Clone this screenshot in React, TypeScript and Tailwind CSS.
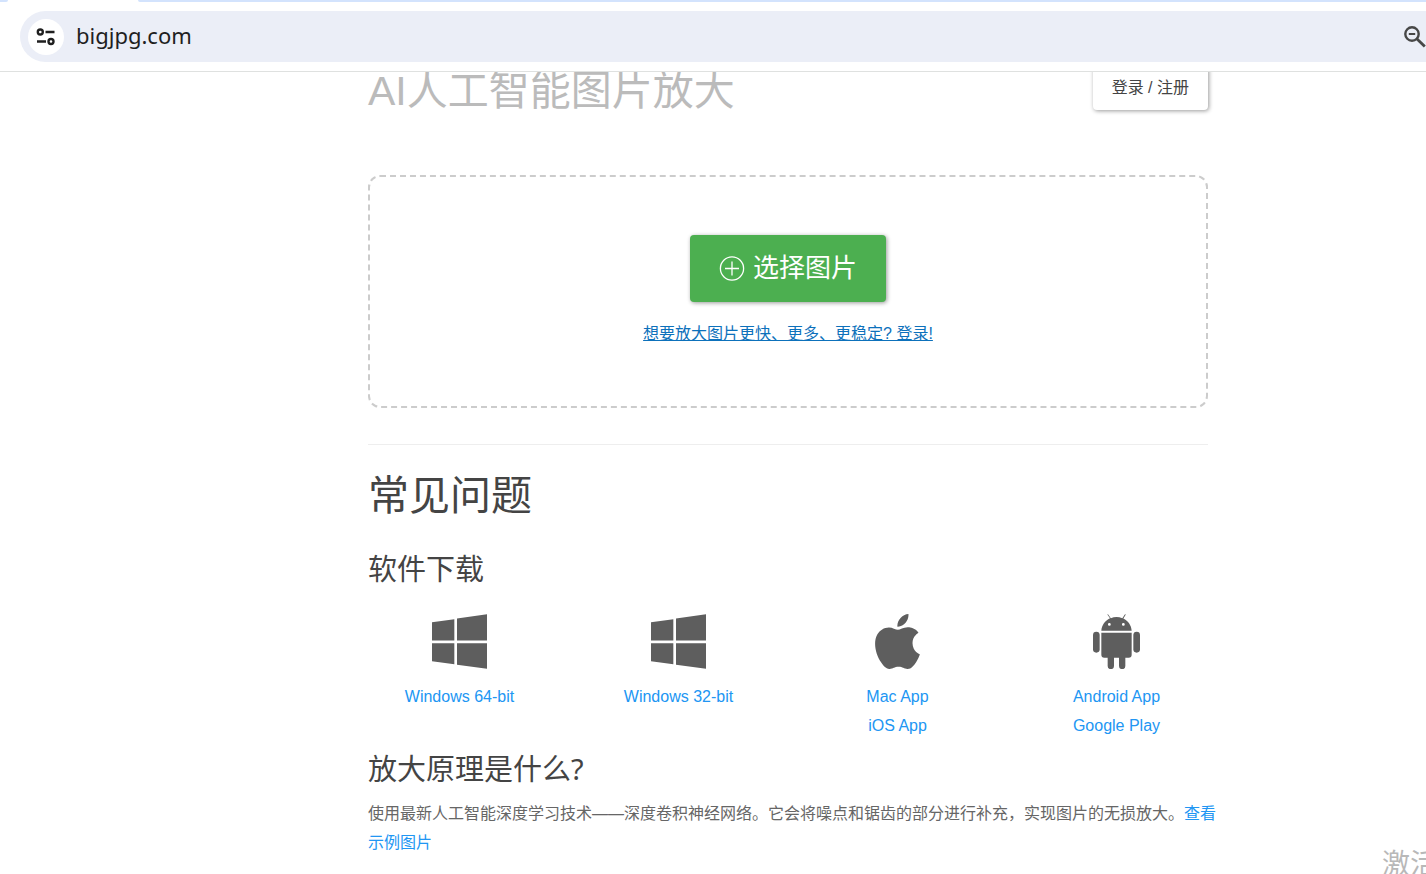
import type { ReactNode } from "react";
import { SiApple } from "react-icons/si";

function SiteSettingsIcon() {
  return (
    <svg viewBox="0 0 20 18" className="h-[18px] w-5" fill="none" stroke="#1f1f1f" strokeWidth="2.400" aria-hidden="true">
      <circle cx="4.300" cy="4" r="2.500" />
      <path d="M9.500 4H18.500M1 13.500H10" />
      <circle cx="15" cy="13.500" r="2.500" />
    </svg>
  );
}

function ZoomOutIcon() {
  return (
    <svg viewBox="0 0 22 22" className="size-[22px]" fill="none" stroke="currentColor" aria-hidden="true">
      <circle cx="8" cy="8" r="6.700" strokeWidth="2.400" />
      <path d="M4.800 8H11.200" strokeWidth="2" />
      <path d="M12.800 12.800 20.800 20.600" strokeWidth="2.800" />
    </svg>
  );
}

function PlusCircleIcon() {
  return (
    <svg viewBox="0 0 26 26" className="size-[26px]" fill="none" stroke="white" strokeWidth="1.300" aria-hidden="true">
      <circle cx="13" cy="12.500" r="11.600" />
      <path d="M6 12.500H20M13 5.500V19.500" />
    </svg>
  );
}

function WindowsIcon() {
  return (
    <svg viewBox="93 41 165 164" className="size-[55px]" fill="currentColor" aria-hidden="true">
      <path d="M93 65 160 56V120H93ZM168 54 258 41V120H168ZM93 128H160V191L93 182ZM168 128H258V205L168 193Z" />
    </svg>
  );
}

function AndroidIcon() {
  return (
    <svg viewBox="726 41 141 165" className="h-[55px] w-[47px]" fill="currentColor" aria-hidden="true">
      <path
        fillRule="evenodd"
        d="M751 91C752 75 762 61 777 54L769 42.500 771 41.500 779.500 53.500C790 49 803 49 814 53.500L822 41.500 824.500 42.500 817 54.500C832 62 841 75 842 91ZM775 68a4.200 4.200 0 1 0 .1 8.400 4.200 4.200 0 0 0 -.1-8.400ZM817 68a4.200 4.200 0 1 0 .1 8.400 4.200 4.200 0 0 0 -.1-8.400Z"
      />
      <path d="M751 97H842V163Q842 172 833 172H823V197a9.500 9.500 0 0 1-19 0V172H789V197a9.500 9.500 0 0 1-19 0V172H760Q751 172 751 163Z" />
      <rect x="726" y="94" width="20" height="63" rx="10" />
      <rect x="847" y="94" width="20" height="63" rx="10" />
    </svg>
  );
}

type Download = { icon: ReactNode; links: string[] };

const downloads: Download[] = [
  { icon: <WindowsIcon />, links: ["Windows 64-bit"] },
  { icon: <WindowsIcon />, links: ["Windows 32-bit"] },
  { icon: <SiApple className="size-[55px]" aria-hidden="true" />, links: ["Mac App", "iOS App"] },
  { icon: <AndroidIcon />, links: ["Android App", "Google Play"] },
];

function BrowserBar() {
  return (
    <header className="relative z-10 border-b border-[#dfe1e0] bg-white">
      <div className="flex h-[2px] justify-between">
        <div className="w-2 rounded-br-full bg-[#d3e3fd]" />
        <div className="ml-[130px] flex-1 rounded-bl-full bg-[#d3e3fd]" />
      </div>
      <div className="pt-[9px] pb-[9px] pl-5">
        <div className="flex h-[51px] items-center rounded-l-full bg-[#ebeef7] pl-2">
          <button type="button" aria-label="查看网站信息" className="flex size-9 items-center justify-center rounded-full bg-white">
            <SiteSettingsIcon />
          </button>
          <input
            type="text"
            aria-label="地址"
            defaultValue="bigjpg.com"
            className="ml-3 min-w-0 flex-1 bg-transparent pb-[2px] font-['Noto_Sans',sans-serif] text-[22px] text-[#1f1f1f] outline-none"
          />
          <button type="button" aria-label="缩放" className="text-[#474747]">
            <ZoomOutIcon />
          </button>
        </div>
      </div>
    </header>
  );
}

export default function App() {
  return (
    <div className="relative flex h-screen flex-col overflow-hidden bg-white font-['Liberation_Sans','Noto_Sans_CJK_SC',sans-serif] text-base leading-[29px] text-[#666]">
      <BrowserBar />
      <main className="flex justify-center pl-[150px]">
        <div className="-mt-[6px] w-full max-w-[840px]">
          <div className="flex h-[50px] items-start justify-between">
            <h1 className="text-[41px] leading-[50px] text-[#bbb]">AI人工智能图片放大</h1>
            <button
              type="button"
              className="h-11 rounded bg-white px-[19px] text-base text-[#444] shadow-[1px_1px_4px_rgba(0,0,0,0.4)]"
            >
              登录 / 注册
            </button>
          </div>

          <section className="mt-[59px] flex h-[233px] flex-col items-center rounded-xl border-2 border-dashed border-[#ccc] pt-[58px]">
            <button
              type="button"
              className="flex h-[67px] items-center gap-2 rounded bg-[#4caf50] px-[29px] text-[26px] text-white shadow-[1px_1px_4px_rgba(0,0,0,0.4)]"
            >
              <PlusCircleIcon />
              选择图片
            </button>
            <a href="#login" className="mt-[17px] text-[#0d71bb] underline">
              想要放大图片更快、更多、更稳定? 登录!
            </a>
          </section>

          <hr className="mt-9 border-[#eee]" />

          <h2 className="mt-[25px] text-[41px] leading-[52px] text-[#444]">常见问题</h2>

          <h3 className="mt-7 text-[29px] leading-[40px] text-[#444]">软件下载</h3>
          <ul className="-mx-[18px] mt-6 grid grid-cols-4">
            {downloads.map((item) => (
              <li key={item.links[0]} className="flex flex-col items-center text-[#5e5e5e]">
                {item.icon}
                <div className="mt-[13px] flex flex-col items-center">
                  {item.links.map((link) => (
                    <a key={link} href="#download" className="text-[#2196f3]">
                      {link}
                    </a>
                  ))}
                </div>
              </li>
            ))}
          </ul>

          <h3 className="mt-[9px] font-['Noto_Sans','Noto_Sans_CJK_SC',sans-serif] text-[29px] leading-[40px] text-[#444]">
            放大原理是什么?
          </h3>
          <p className="-mr-3 mt-[10px]">
            使用最新人工智能深度学习技术——深度卷积神经网络。它会将噪点和锯齿的部分进行补充，实现图片的无损放大。
            <a href="#examples" className="text-[#2196f3]">
              查看示例图片
            </a>
          </p>
        </div>
      </main>
      <div className="absolute -right-3 -bottom-2 font-['Noto_Sans_CJK_SC',sans-serif] text-[28px] leading-[40px] text-[#b8b8b8]">
        激活
      </div>
    </div>
  );
}
